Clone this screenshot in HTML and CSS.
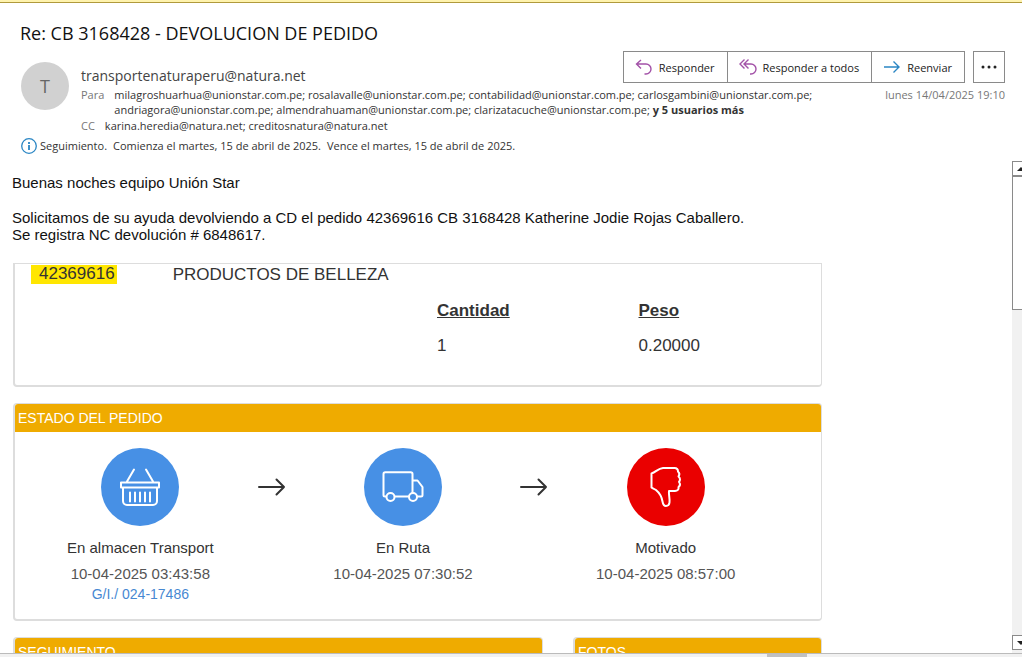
FILE: index.html
```html
<!DOCTYPE html>
<html lang="es">
<head>
<meta charset="UTF-8">
<meta name="viewport" content="width=device-width, initial-scale=1.0">
<title>Re: CB 3168428 - DEVOLUCION DE PEDIDO</title>
<link rel="stylesheet" href="styles.css">
</head>
<body>
<header class="head">
  <h1 class="subject">Re: CB 3168428 - DEVOLUCION DE PEDIDO</h1>
  <div class="info">
    <div class="avatar">T</div>
    <div class="details">
      <div class="line">
        <div class="sender">transportenaturaperu@natura.net</div>
        <div class="actions">
          <div class="group">
            <button type="button">
              <svg width="18" height="18" viewBox="0 0 18 18" fill="none" stroke="#a352a8" stroke-width="1.4"><path d="M6 2 1.5 6 6 10.500M1.500 6H11a5 5 0 0 1 0 10H9.500"/></svg>
              Responder
            </button>
            <button type="button">
              <svg width="18" height="18" viewBox="0 0 18 18" fill="none" stroke="#a352a8" stroke-width="1.4"><path d="M5.500 1.500 1 6l4.500 4.500M9.500 1.500 5 6l4.500 4.500M5 6h7a4.800 4.800 0 0 1 0 10h-1"/></svg>
              Responder a todos
            </button>
            <button type="button">
              <svg width="18" height="18" viewBox="0 0 18 18" fill="none" stroke="#2a86c4" stroke-width="1.4"><path d="M1 9h15M10.500 3.500 16 9l-5.500 5.500"/></svg>
              Reenviar
            </button>
          </div>
          <button type="button" class="more" aria-label="Más acciones">
            <svg width="16" height="4" viewBox="0 0 16 4" fill="#222"><circle cx="2" cy="2" r="1.500"/><circle cx="8" cy="2" r="1.500"/><circle cx="14" cy="2" r="1.500"/></svg>
          </button>
        </div>
      </div>
      <div class="line">
        <div class="to">
          <span class="label">Para</span>
          <div>milagroshuarhua@unionstar.com.pe; rosalavalle@unionstar.com.pe; contabilidad@unionstar.com.pe; carlosgambini@unionstar.com.pe;<br>andriagora@unionstar.com.pe; almendrahuaman@unionstar.com.pe; clarizatacuche@unionstar.com.pe; <b>y 5 usuarios más</b></div>
        </div>
        <time class="date">lunes 14/04/2025 19:10</time>
      </div>
      <div class="to cc">
        <span class="label">CC</span>
        <div>karina.heredia@natura.net; creditosnatura@natura.net</div>
      </div>
    </div>
  </div>
  <div class="follow">
    <svg width="16" height="16" viewBox="0 0 16 16" fill="none" stroke="#2a86c4"><circle cx="8" cy="8" r="7.300" stroke-width="1.300"/><path d="M8 7v5M8 4v2" stroke-width="1.800"/></svg>
    <span>Seguimiento.</span>
    <span>Comienza el martes, 15 de abril de 2025.</span>
    <span>Vence el martes, 15 de abril de 2025.</span>
  </div>
</header>

<div class="reader">
  <main class="message">
    <p>Buenas noches equipo Unión Star</p>
    <p>Solicitamos de su ayuda devolviendo a CD el pedido 42369616 CB 3168428 Katherine Jodie Rojas Caballero.<br>Se registra NC devolución # 6848617.</p>

    <div class="report">
      <section class="card product">
        <div class="product-head">
          <mark>42369616</mark>
          <span>PRODUCTOS DE BELLEZA</span>
        </div>
        <table>
          <thead><tr><th>Cantidad</th><th>Peso</th></tr></thead>
          <tbody><tr><td>1</td><td>0.20000</td></tr></tbody>
        </table>
      </section>

      <section class="card">
        <h2>ESTADO DEL PEDIDO</h2>
        <div class="steps">
          <div class="step">
            <div class="icon">
              <svg width="42" height="42" viewBox="0 0 42 42" fill="none" stroke="#fff" stroke-width="2" stroke-linecap="round" stroke-linejoin="round"><path d="M8 15.500 15 3.500M34 15.500 27 3.500M2 16.500h38v5H2zM4 22v13a4 4 0 0 0 4 4h26a4 4 0 0 0 4-4V22"/><path d="M11 26.500v9M16 26.500v9M21 26.500v9M26 26.500v9M31 26.500v9"/></svg>
            </div>
            <div class="name">En almacen Transport</div>
            <div class="when">10-04-2025 03:43:58</div>
            <a href="#">G/I./ 024-17486</a>
          </div>
          <svg class="arrow" width="28" height="18" viewBox="0 0 28 18" fill="none" stroke="#333" stroke-width="2" stroke-linecap="round" stroke-linejoin="round"><path d="M1 9h25M18.500 1.500 26 9l-7.500 7.500"/></svg>
          <div class="step">
            <div class="icon">
              <svg width="42" height="42" viewBox="0 0 42 42" fill="none" stroke="#fff" stroke-width="2" stroke-linejoin="round"><path d="M4.500 30.500H3A1.500 1.500 0 0 1 1.500 29V8A1.800 1.800 0 0 1 3.300 6.200h25.400A1.800 1.800 0 0 1 30.500 8v19M12.500 30.500H27M30.500 14.500h5L40.500 21v8a1.500 1.500 0 0 1-1.500 1.500h-4"/><circle cx="8.500" cy="31" r="4"/><circle cx="31" cy="31" r="4"/></svg>
            </div>
            <div class="name">En Ruta</div>
            <div class="when">10-04-2025 07:30:52</div>
          </div>
          <svg class="arrow" width="28" height="18" viewBox="0 0 28 18" fill="none" stroke="#333" stroke-width="2" stroke-linecap="round" stroke-linejoin="round"><path d="M1 9h25M18.500 1.500 26 9l-7.500 7.500"/></svg>
          <div class="step">
            <div class="icon red">
              <svg width="42" height="42" viewBox="0 0 42 42" fill="none" stroke="#fff" stroke-width="2" stroke-linejoin="round"><path d="M6.500 7.500C11 6 13 2.500 18 2h11.500q3.500 0 3.500 3.500c1.800 1.500 1.500 3.500.5 5 2 1.500 1.800 4 .5 5.500 1.500 2 .8 4-.5 5 .5 2.500-1 4-3.500 4H24c-.5 3 1 8 .5 11.500-.3 2.500-1.500 3.500-3.500 3.500s-3-1.500-3.500-4.500c-.7-4.500-3.500-9-6.500-11.500-1.500-1.200-3-1.200-4.500-2.500z"/></svg>
            </div>
            <div class="name">Motivado</div>
            <div class="when">10-04-2025 08:57:00</div>
          </div>
        </div>
      </section>

      <div class="pair">
        <section class="card"><h2>SEGUIMIENTO</h2></section>
        <section class="card"><h2>FOTOS</h2></section>
      </div>
    </div>
  </main>
  <div class="scroll">
    <button type="button" aria-label="Subir"><svg width="8" height="4" viewBox="0 0 8 4" fill="#222"><path d="M0 4 4 0l4 4z"/></svg></button>
    <div class="thumb"></div>
    <button type="button" class="down" aria-label="Bajar"><svg width="8" height="4" viewBox="0 0 8 4" fill="#222"><path d="M0 0h8L4 4z"/></svg></button>
  </div>
</div>
<div class="bottom"><div class="grip"></div></div>
</body>
</html>
```

FILE: styles.css
```css
*{box-sizing:border-box;margin:0;padding:0}
body{height:100vh;display:flex;flex-direction:column;overflow:hidden;background:#fff;border-top:2px solid #fff3ae;font-family:"Open Sans","Noto Sans",sans-serif;font-size:11px;color:#333}
svg{display:block;flex:none}
button{font:inherit;color:#222;background:#fff;border:1px solid #8a8a8a}

.head{border-top:1px solid #b09a3c;padding:18px 17px 0 20px}
.subject{font-size:18px;line-height:24px;font-weight:400;color:#111}
.info{display:flex;gap:12px;margin-top:6px}
.avatar{flex:none;width:48px;height:48px;margin:11px 0 0 1px;border-radius:50%;background:#d1d1d1;color:#666;font-size:18px;line-height:48px;text-align:center}
.details{flex:1}
.line{display:flex;justify-content:space-between}
.sender{font-size:14px;line-height:20px;padding-top:15px;color:#444}
.actions{display:flex;gap:8px;height:32px}
.group{display:flex}
.group button{display:flex;align-items:center;gap:6px;padding:0 12px 0 11px}
.group button+button{border-left:none}
.more{width:32px;display:flex;align-items:center;justify-content:center}
.line+.line{margin-top:1px}
.to{display:flex;gap:10px;line-height:15px;white-space:nowrap}
.label,.date{color:#777}
.date{line-height:15px;white-space:nowrap}
.cc{margin-top:1px}
.follow{display:flex;align-items:center;gap:6px;margin:5px 0 0 1px;line-height:16px}
.follow svg{margin-right:-3px}

.reader{flex:1;min-height:0;display:flex;margin-top:7px}
.message{flex:1;overflow:hidden;padding:13px 12px 0;font-family:"Liberation Sans",Arial,sans-serif;font-size:15px;line-height:17px;color:#111}
.message p{margin-bottom:18px}
.report{max-width:810px;color:#333;padding-left:1px;margin-top:20px}
.card{border:1px solid #ddd;border-left-width:2px;border-bottom-width:2px;border-radius:4px;margin-bottom:16px}
.product{height:124px;border-radius:0 0 4px 4px;font-size:17px}
.product-head{display:flex;gap:56px;padding:1px 16px 0}
.product-head mark{background:#ffe600;color:#333;padding:0 2px 0 8px;line-height:17px}
.product-head span{line-height:19px}
.product table{width:50%;margin:9px 0 0 auto;border-collapse:collapse;table-layout:fixed}
.product th,.product td{text-align:left;padding-left:19px;height:35px}
.product th{text-decoration:underline}
.card h2{background:#efab00;color:#fff;font-size:14px;font-weight:400;line-height:28px;padding-left:3px;border-radius:3px 3px 0 0}
.steps{display:flex;align-items:flex-start;padding:16px 38px 16px 8px;height:187px}
.step{flex:1;text-align:center}
.icon{width:78px;height:78px;margin:0 auto 13px;border-radius:50%;background:#4790e5;display:flex;align-items:center;justify-content:center}
.red{background:#ea0000}
.name{line-height:18px;margin-bottom:8px}
.when{line-height:18px;color:#555}
.step a{display:block;font-size:14px;line-height:22px;color:#4788d2;text-decoration:none}
.arrow{margin-top:30px}
.pair{display:grid;grid-template-columns:530px 1fr;gap:30px}

.scroll{width:10px;overflow:hidden;background:#f1f1f1;display:flex;flex-direction:column}
.scroll button{flex:none;width:17px;height:15px;display:flex;align-items:center;justify-content:center}
.thumb{width:17px;height:134px;background:#fff;border:1px solid #8a8a8a}
.scroll .down{margin:auto 0 3px}
.bottom{flex:none;height:4px;border-top:1px solid #bbb;background:#f1f1f1}
.grip{width:40px;height:3px;margin-left:75%;background:#c1c1c1}
```
